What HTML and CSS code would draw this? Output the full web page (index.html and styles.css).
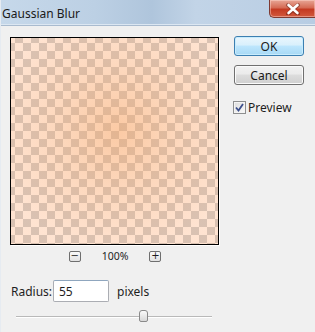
FILE: index.html
```html
<!DOCTYPE html>
<html>
<head>
<meta charset="utf-8">
<link rel="stylesheet" href="styles.css">
</head>
<body>
<div class="window">
  <div class="titlebar">
    <span class="title">Gaussian Blur</span>
    <div class="close">
      <svg width="16" height="12" viewBox="0 0 16 12"><path d="M3 1.5 L13 10.5 M13 1.5 L3 10.5" stroke="#5a1a10" stroke-width="4" stroke-linecap="round" opacity="0.45" transform="translate(0 0.6)"/><path d="M3.5 2 L12.5 10 M12.5 2 L3.5 10" stroke="#fff" stroke-width="2.6" stroke-linecap="round"/></svg>
    </div>
  </div>
  <div class="content">
    <div class="main">
      <div class="left">
        <div class="preview"></div>
        <div class="zoom">
          <span class="zbtn">−</span>
          <span class="zval">100%</span>
          <span class="zbtn">+</span>
        </div>
      </div>
      <div class="right">
        <button class="btn ok">OK</button>
        <button class="btn cancel">Cancel</button>
        <label class="check"><span class="box"><svg width="9" height="9" viewBox="0 0 9 9"><path d="M1 4.5 L3.5 7.5 L8 1" stroke="#3c4f8c" stroke-width="1.8" fill="none"/></svg></span>Preview</label>
      </div>
    </div>
    <div class="radius">
      <span class="lbl">Radius:</span>
      <span class="input">55</span>
      <span class="unit">pixels</span>
    </div>
    <div class="slider">
      <div class="track"></div>
      <div class="thumb"></div>
    </div>
  </div>
</div>
</body>
</html>
```

FILE: styles.css
```css
* { box-sizing: border-box; }
html, body { margin: 0; padding: 0; }
body {
  width: 315px; height: 332px; overflow: hidden;
  font-family: "Noto Sans", "Open Sans", sans-serif;
  font-size: 11.5px; color: #1e1e1e;
  background: #f0f0f0;
}
.window { width: 315px; height: 332px; background: #f0f0f0; border-left: 1px solid #e6ebf1; }
.titlebar {
  height: 26px;
  display: flex; align-items: flex-start;
  background: linear-gradient(90deg, #c6d8ea 0%, #bcd0e4 30%, #afc5dc 48%, #c2d4e7 62%, #b8cde3 100%);
  border-bottom: 1px solid #a9bbcf;
  box-shadow: inset 0 -1px 0 #dce7f2;
}
.title { padding: 5px 0 0 1px; font-size: 12px; color: #1a1a1a; }
.close {
  margin-left: auto; width: 46px; height: 18px;
  background: linear-gradient(#e8a696 0%, #d56b55 45%, #c43a22 55%, #d2593e 100%);
  border: 1px solid #7e3a32; border-top: none; border-right: none;
  border-radius: 0 0 0 5px;
  display: flex; align-items: center; justify-content: center;
  box-shadow: inset 0 0 0 1px rgba(255,220,210,0.45);
}
.content { padding: 11px 0 0 9px; }
.main { display: flex; }
.left { width: 209px; }
.preview {
  width: 209px; height: 208px; border: 1px solid #000;
  box-shadow: 1px 1px 0 #fff;
  background:
    radial-gradient(ellipse 60% 60% at 52% 45%, rgba(245,160,90,0.40) 0%, rgba(245,160,90,0.2) 50%, rgba(245,160,90,0.04) 100%),
    conic-gradient(#d8c3b6 0 25%, #ffe6d6 0 50%, #d8c3b6 0 75%, #ffe6d6 0) -4px -3px / 16px 16px;
}
.zoom { display: flex; justify-content: center; align-items: center; height: 18px; margin-top: 2px; padding-left: 1px; }
.zbtn {
  width: 12px; height: 11px; border: 1px solid #6f6f6f; border-radius: 2px;
  background: linear-gradient(#fafafa, #e2e2e2);
  font-size: 10px; line-height: 8px; text-align: center; font-family: "DejaVu Sans", sans-serif;
}
.zval { margin: 0 21px; font-size: 10.5px; }
.right { margin-left: 15px; display: flex; flex-direction: column; width: 70px; margin-top: -1px; }
.btn {
  width: 70px; height: 20px; padding: 0; margin: 0;
  font-family: inherit; font-size: 12px; color: #1a1a1a;
  border-radius: 3px;
}
.ok {
  border: 1px solid #3c7fb1;
  background: linear-gradient(#eaf6fd 0%, #d9f0fc 45%, #bee6fd 50%, #a7d9f5 100%);
  box-shadow: inset 0 0 0 1px #c8ecfd;
}
.cancel {
  margin-top: 9px;
  border: 1px solid #707070;
  background: linear-gradient(#f2f2f2 0%, #ebebeb 45%, #dddddd 50%, #cfcfcf 100%);
  box-shadow: inset 0 0 0 1px #fbfbfb;
}
.check { display: flex; align-items: center; margin-top: 14px; margin-left: -1px; font-size: 12px; }
.box {
  width: 13px; height: 13px; border: 1px solid #8e8f8f; margin-right: 2px;
  background: linear-gradient(135deg, #dcdcdc, #fafafa);
  display: flex; align-items: center; justify-content: center;
  box-shadow: inset 0 0 0 1px #f4f4f4;
}
.radius { display: flex; align-items: center; margin-top: 15px; padding-left: 1px; font-size: 12px; }
.lbl { width: 42px; }
.input {
  width: 56px; height: 22px; border: 1px solid #abadb3; border-top-color: #8fa6be;
  background: #fff; padding: 2px 0 0 5px; border-radius: 2px;
}
.unit { margin-left: 8px; }
.slider { position: relative; height: 20px; margin-top: 6px; }
.track { position: absolute; left: 6px; top: 8px; width: 196px; height: 2px; background: #b9b9b9; border-bottom: 1px solid #fff; }
.thumb {
  position: absolute; left: 129px; top: 2px; width: 9px; height: 12px;
  border: 1px solid #8a8a8a; border-radius: 3px 3px 2px 2px;
  background: linear-gradient(#fbfbfb, #d8d8d8);
}
```
